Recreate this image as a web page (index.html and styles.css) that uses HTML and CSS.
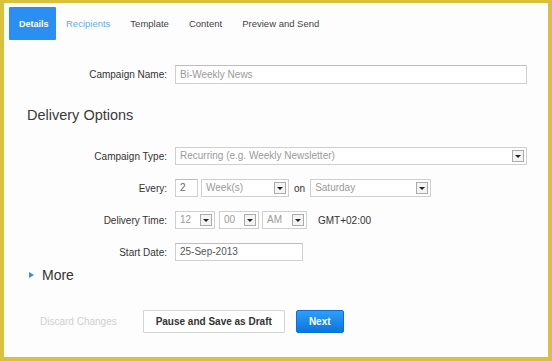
FILE: index.html
```html
<!DOCTYPE html>
<html lang="en">
<head>
  <meta charset="UTF-8" />
  <title>Campaign Details</title>
  <link rel="stylesheet" href="styles.css">
</head>
<body>
  <div class="frame">

    <nav class="tabs">
      <span class="tab active">Details</span>
      <span class="tab visited">Recipients</span>
      <span class="tab">Template</span>
      <span class="tab">Content</span>
      <span class="tab">Preview and Send</span>
    </nav>

    <div class="form first">
      <label class="label">Campaign Name:</label>
      <div class="field input wide">Bi-Weekly News</div>
    </div>

    <h2 class="heading">Delivery Options</h2>

    <div class="form">
      <label class="label">Campaign Type:</label>
      <div class="field select wide">Recurring (e.g. Weekly Newsletter)<span class="arrow"></span></div>

      <label class="label">Every:</label>
      <div class="inline">
        <div class="field input num">2</div>
        <div class="field select week">Week(s)<span class="arrow"></span></div>
        <span class="word">on</span>
        <div class="field select day">Saturday<span class="arrow"></span></div>
      </div>

      <label class="label">Delivery Time:</label>
      <div class="inline">
        <div class="field select hour">12<span class="arrow"></span></div>
        <div class="field select hour">00<span class="arrow"></span></div>
        <div class="field select ampm">AM<span class="arrow"></span></div>
        <span class="zone">GMT+02:00</span>
      </div>

      <label class="label">Start Date:</label>
      <div class="field input date">25-Sep-2013</div>
    </div>

    <div class="more"><span class="tri"></span>More</div>

    <div class="actions">
      <span class="discard">Discard Changes</span>
      <button class="btn draft">Pause and Save as Draft</button>
      <button class="btn next">Next</button>
    </div>

  </div>
</body>
</html>
```

FILE: styles.css
```css
html, body {
  margin: 0;
  padding: 0;
}
body {
  font-family: "Liberation Sans", Arial, sans-serif;
  color: #333;
  background: #fff;
}
.frame {
  width: 552px;
  height: 361px;
  box-sizing: border-box;
  border-style: solid;
  border-color: #d9c13c;
  border-width: 3px 4px 4px 4px;
  background: #fdfdfd;
}

/* tabs */
.tabs {
  display: flex;
  padding: 4px 0 0 5px;
  height: 33px;
}
.tab {
  display: flex;
  align-items: center;
  padding: 0 10px;
  font-size: 9.5px;
  color: #444;
}
.tab.active {
  background: #2a8ef2;
  color: #fff;
  font-weight: bold;
  font-size: 9px;
  width: 27px;
  border-radius: 1px;
}
.tab.visited {
  color: #68aedb;
}

/* form rows */
.form {
  display: grid;
  grid-template-columns: 163px 1fr;
  column-gap: 8px;
  row-gap: 14px;
  padding-right: 21px;
  align-items: center;
}
.form.first {
  margin-top: 25px;
}
.label {
  text-align: right;
  font-size: 10px;
  color: #333;
}
.heading {
  margin: 23px 0 24px 0;
  padding-left: 23px;
  font-size: 14.5px;
  line-height: 16px;
  font-weight: normal;
  color: #3a3a3a;
}
.field {
  position: relative;
  box-sizing: border-box;
  height: 18px;
  border: 1px solid #cfcfcf;
  background: #fff;
  font-size: 10px;
  line-height: 16px;
  padding-left: 4px;
  color: #9a9a9a;
  white-space: nowrap;
}
.input {
  border-top-color: #bdbdbd;
}
.first .field {
  height: 19px;
  line-height: 17px;
}
.arrow {
  position: absolute;
  right: 2px;
  top: 2px;
  width: 12px;
  height: 12px;
  box-sizing: border-box;
  border: 1px solid #aaa;
  background: #f4f4f4;
}
.arrow::after {
  content: "";
  position: absolute;
  left: 2px;
  top: 4px;
  border-left: 3px solid transparent;
  border-right: 3px solid transparent;
  border-top: 3px solid #222;
}
.inline {
  display: flex;
  align-items: center;
}
.num {
  width: 23px;
  margin-right: 3px;
  color: #666;
}
.week {
  width: 88px;
}
.word {
  font-size: 10px;
  color: #333;
  margin: 0 5px;
}
.day {
  width: 121px;
}
.hour {
  width: 40px;
  margin-right: 4px;
}
.ampm {
  width: 45px;
  margin-left: -1px;
}
.zone {
  font-size: 10px;
  color: #333;
  margin-left: 11px;
}
.date {
  width: 128px;
  color: #555;
}

/* more toggle */
.more {
  display: flex;
  align-items: center;
  margin-top: 6px;
  padding-left: 25px;
  font-size: 14px;
  line-height: 16px;
  color: #333;
}
.tri {
  width: 0;
  height: 0;
  border-top: 3px solid transparent;
  border-bottom: 3px solid transparent;
  border-left: 5px solid #3f8fc8;
  margin-right: 8px;
}

/* buttons */
.actions {
  display: flex;
  align-items: center;
  margin-top: 27px;
  padding-left: 36px;
}
.discard {
  font-size: 10px;
  color: #cfcfcf;
  margin-right: 26px;
}
.btn {
  height: 23px;
  font-family: "Liberation Sans", Arial, sans-serif;
  font-size: 10px;
  font-weight: bold;
  cursor: pointer;
  padding: 0;
}
.draft {
  width: 142px;
  background: #fff;
  border: 1px solid #d4d4d4;
  color: #333;
  border-radius: 1px;
}
.next {
  width: 48px;
  margin-left: 11px;
  background: linear-gradient(#2f9ef7, #0a74df);
  border: 1px solid #0a6fd6;
  border-radius: 2px;
  color: #fff;
}
```
